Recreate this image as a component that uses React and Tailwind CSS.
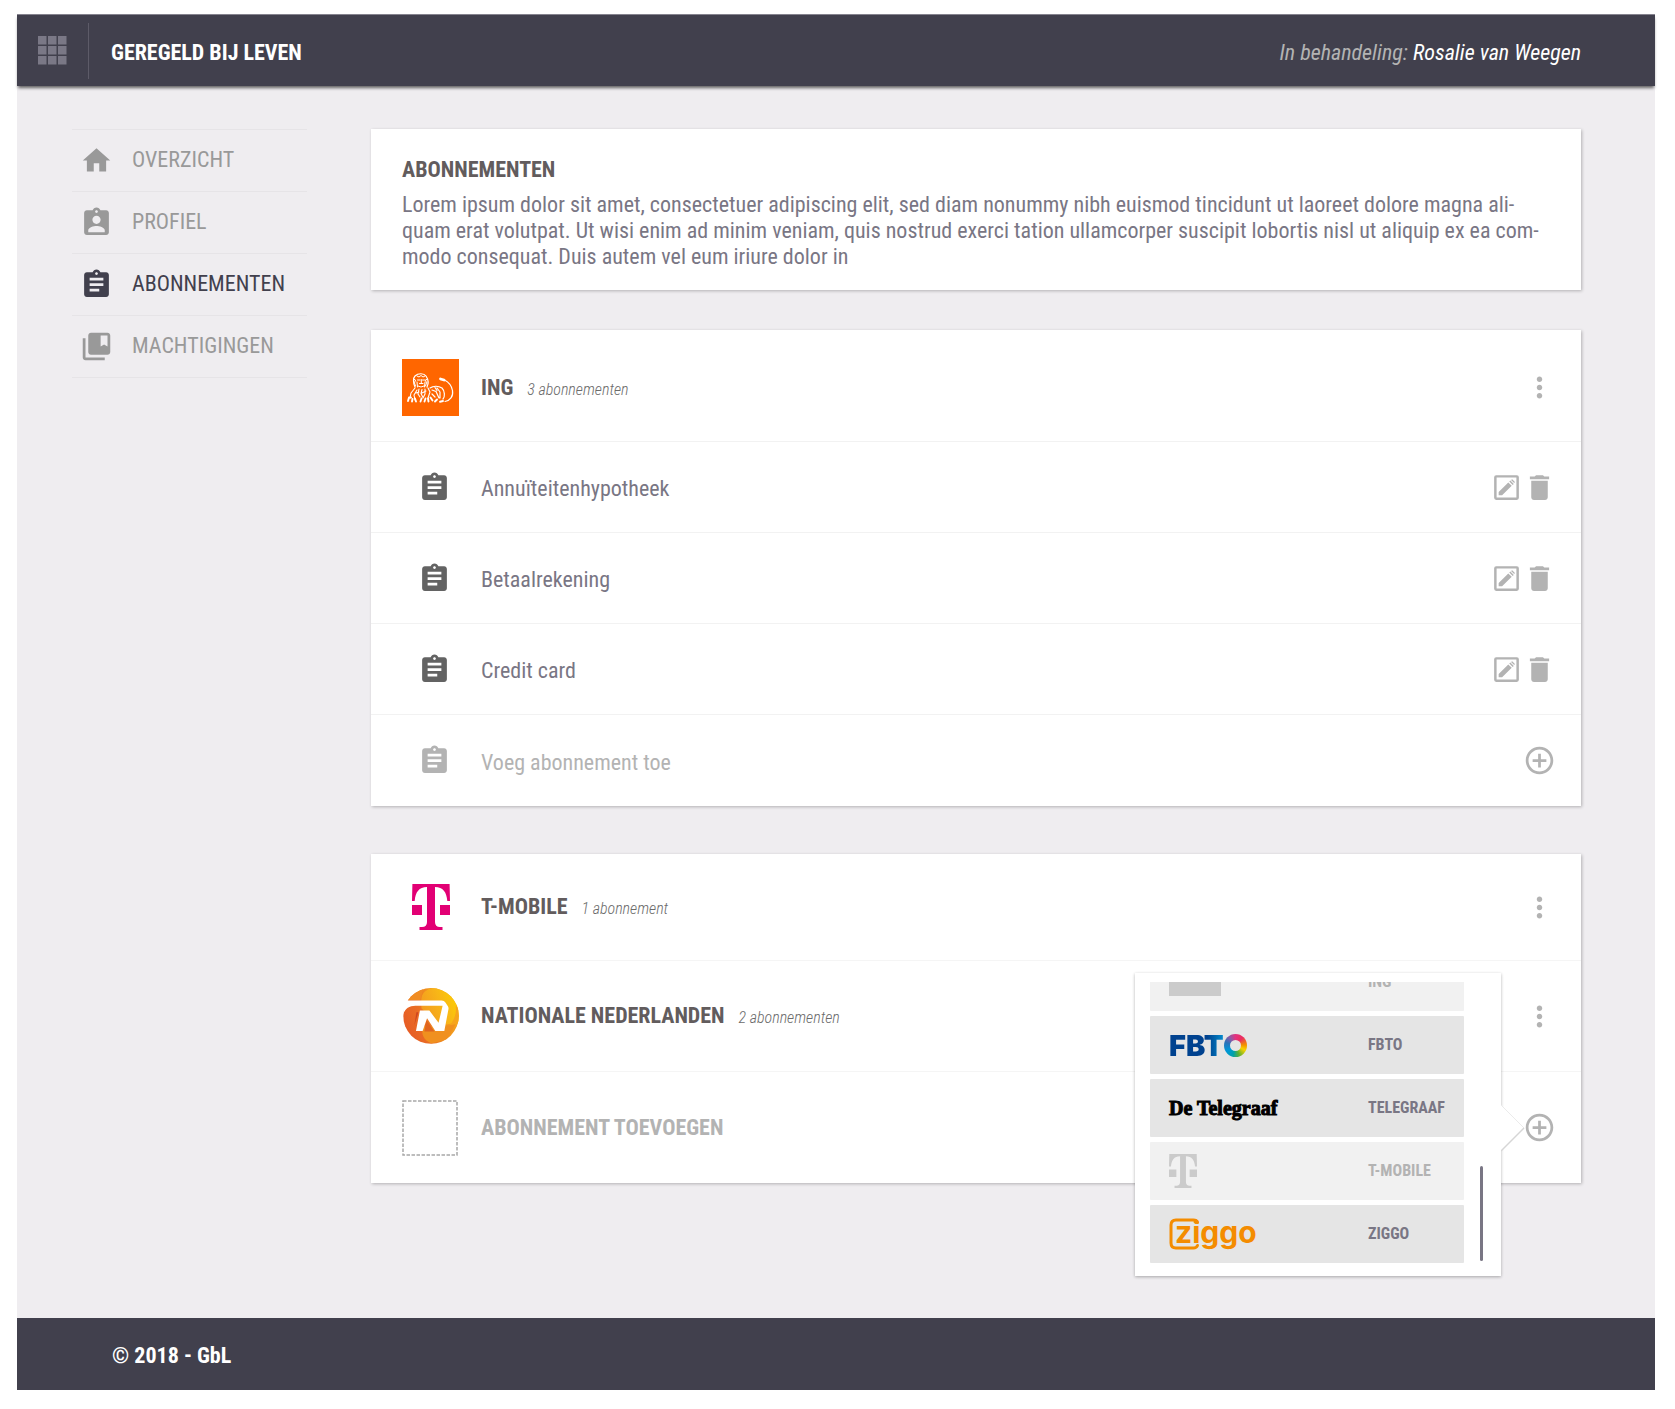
import {
  MdHome,
  MdAssignmentInd,
  MdAssignment,
  MdCollectionsBookmark,
  MdMoreVert,
  MdDelete,
  MdAddCircleOutline,
} from "react-icons/md";

function GridIcon() {
  const steps = [0, 10, 20];
  return (
    <svg width="29" height="29" viewBox="0 0 29 29" fill="#7a7886" aria-hidden="true">
      {steps.map((y) => steps.map((x) => <rect key={`${x}-${y}`} x={x} y={y} width="8.500" height="8.500" />))}
    </svg>
  );
}

function EditBoxIcon() {
  return (
    <svg width="33" height="33" viewBox="0 0 24 24" fill="currentColor" aria-hidden="true">
      <path
        fillRule="evenodd"
        d="M4.500 3h15A1.500 1.500 0 0 1 21 4.500v15a1.500 1.500 0 0 1-1.500 1.500h-15A1.500 1.500 0 0 1 3 19.500v-15A1.500 1.500 0 0 1 4.500 3zM4.800 4.800v14.400h14.400V4.800z"
      />
      <path d="M6.300 17.700v-2.500l7-6.900 2.500 2.500-7 6.900zM14 7.700l.8-.8 2.500 2.500-.8.8zM15.300 6.600l.3-.3a.6.6 0 0 1 .9 0l1.300 1.400a.6.6 0 0 1 0 .9l-.2.200z" />
    </svg>
  );
}

function IngLogo() {
  return (
    <svg width="57" height="57" viewBox="0 0 57 57" fill="none" stroke="#fff" strokeLinecap="round" strokeLinejoin="round" role="img" aria-label="ING">
      <rect width="57" height="57" fill="#ff6600" stroke="none" />
      <path strokeWidth="1.200" d="M13 28c-2-4-2-9 0-11 3-3 9-3 11 0 2 3 3 7 1 11" />
      <path strokeWidth="1" d="M11.500 20l2 1-1 3 1 3M25.500 20l-2 1 1 3-1 3M15 17l2 1 2-1.500 2 1.500 2-1M15.500 21h2.500M20.500 21h2.500M19.300 20.500v4M17.500 24.500h3.500M16 27l3 1 3-1M15 23l.5 5M23 23l-.5 5" />
      <path strokeWidth="1.100" d="M13 29l-4 5-1 5M15 31l-3 5 1 5M17 30l-1 5 2 3M20 30.500l-1 4 2 4M23 30l0 5-2 4M26 29l2 4-2 6M14 34l3-1M20 34l4-2" />
      <path strokeWidth="1.900" d="M6 42l1-3.500 2 0M10 42.500l.5-2.500M14 42.500l-1-3M18.500 42.500l1-3M22.500 42.500l1-3M26.500 42.500l-.500-3M30.500 41.500l-2-3M33 42.500l2-2M38 42.700l3-.7" />
      <path strokeWidth="1.200" d="M28 29c3-2 8-2.500 12 0 3 3 3 9 1 11M30 31l4 1.500 3 6.500M35 29l3 4 0 6M33 28.500l2 3M30 35l3 3M43 42.500c5-1 8.500-5 7.500-11-1-5-4-8.500-8-10.500" />
      <path strokeWidth="2.800" d="M38.500 20l3.500 1" />
    </svg>
  );
}

function TMobileLogo({ className }) {
  return (
    <svg viewBox="0 0 38 46" className={className} fill="currentColor" role="img" aria-label="T-Mobile">
      <path d="M.4 0h37.200l.4 17h-2.700C34.600 8 31 3 23 3v35q0 5 5 5h2.500v3h-23v-3H10q5 0 5-5V3C7 3 3.400 8 2.700 17H0zM0 21h10v10H0zM28 21h10v10H28z" />
    </svg>
  );
}

function NnLogo() {
  return (
    <svg width="56" height="56" viewBox="0 0 55 55.500" role="img" aria-label="Nationale Nederlanden">
      <defs>
        <linearGradient id="nn-base" x1="0" y1="0.700" x2="1" y2="0.300">
          <stop offset="0" stopColor="#e65a25" />
          <stop offset="0.350" stopColor="#ea6f24" />
          <stop offset="0.600" stopColor="#f0921f" />
          <stop offset="1" stopColor="#f6a81c" />
        </linearGradient>
        <linearGradient id="nn-top" x1="0" y1="0.600" x2="1" y2="0.200">
          <stop offset="0" stopColor="#f39a20" />
          <stop offset="0.550" stopColor="#f8b717" />
          <stop offset="1" stopColor="#fdd100" />
        </linearGradient>
        <clipPath id="nn-disc">
          <circle cx="27.500" cy="27.700" r="27.600" />
        </clipPath>
      </defs>
      <g clipPath="url(#nn-disc)">
        <rect width="55" height="56" fill="url(#nn-base)" />
        <path d="M0 0h20l-3 12H0z" fill="#f08c22" />
        <path d="M18 14C17 6 22 1 30 0h25v33C48 36 40 37 34 36L18 20z" fill="url(#nn-top)" />
        <path d="M52 18c1 8-2 16-9 22l4 2 9-8V18z" fill="#f6a51d" />
        <path d="M20 38c-3 7 0 14 8 17l15-4 9-15-12 2z" fill="#f0901f" />
        <path d="M13 24l-2 13 4-13z" fill="#cf4520" />
        <path d="M23 32l8 11-10 0z" fill="#e0651f" />
      </g>
      <path
        fill="#fff"
        d="M0 12.300h38q2.600 0 4 2.400l2.400 3.600q.7 1.200.4 2.700l-4.100 21.700h-8.900L23.600 30l-4.400 12.700h-6.600l3.900-20.400h9.400L35 34.500l4-16.800H12C6 17.700 2 20.500 0 26z"
      />
    </svg>
  );
}

function FbtoLogo() {
  return (
    <span className="flex items-center">
      <span className="bg-linear-to-r from-[#00428f] from-70% to-[#0a8fd0] bg-clip-text font-['Inter',sans-serif] text-[29px] leading-[29px] font-black text-transparent">
        FBT
      </span>
      <span className="flex size-[23px] items-center justify-center rounded-full bg-[conic-gradient(#e5317f,#ea2f5f_12%,#f39200_24%,#f9d200_32%,#5fb130_44%,#00a1a8_54%,#0096d8_66%,#2b72b8_80%,#8b5ba6_90%,#e5317f)]">
        <span className="size-[11px] rounded-full bg-[#e5e5e5]" />
      </span>
    </span>
  );
}

function TelegraafLogo() {
  return (
    <span className="font-['Liberation_Serif',serif] text-[20px] leading-[26px] font-bold whitespace-nowrap text-black [-webkit-text-stroke:1px_black]">
      De Telegraaf
    </span>
  );
}

function ZiggoLogo() {
  return (
    <span className="relative flex h-[32px] items-center pl-[6px] text-[#f48c00]">
      <svg width="31" height="32" viewBox="0 0 31 32" fill="none" stroke="currentColor" strokeWidth="3" strokeLinecap="round" className="absolute top-0 left-0" aria-hidden="true">
        <path d="M28.500 4.500Q27.500 2 24.500 2H7Q2 2 2 7v18q0 5 5 5h17.500q3 0 4-2.500" />
      </svg>
      <span className="pb-[4px] font-['Inter',sans-serif] text-[30px] leading-[32px] font-bold">ziggo</span>
    </span>
  );
}

const navItems = [
  { label: "OVERZICHT", Icon: MdHome },
  { label: "PROFIEL", Icon: MdAssignmentInd },
  { label: "ABONNEMENTEN", Icon: MdAssignment, active: true },
  { label: "MACHTIGINGEN", Icon: MdCollectionsBookmark },
];

const products = ["Annuïteitenhypotheek", "Betaalrekening", "Credit card"];

const providers = [
  { label: "ING", logo: <span className="h-[28px] w-[52px] bg-[#cbcbcb]" />, disabled: true },
  { label: "FBTO", logo: <FbtoLogo /> },
  { label: "TELEGRAAF", logo: <TelegraafLogo /> },
  { label: "T-MOBILE", logo: <TMobileLogo className="h-[34px] w-[28px] text-[#cbcbcb]" />, disabled: true },
  { label: "ZIGGO", logo: <ZiggoLogo /> },
];

const card = "bg-white shadow-[1px_1px_3px_rgba(0,0,0,0.25)]";

function IconButton({ label, children }) {
  return (
    <button type="button" aria-label={label} className="size-[33px] cursor-pointer text-[#b3b3b3]">
      {children}
    </button>
  );
}

function ProviderRow({ logo, name, count, className }) {
  return (
    <div className={`flex items-center gap-[22px] pr-[25px] pl-[31px] ${className}`}>
      <div className="flex w-[57px] justify-center">{logo}</div>
      <div className="flex flex-1 items-baseline gap-[14px]">
        <h2 className="text-[22px] leading-[26px] font-bold text-[#625c5d]">{name}</h2>
        <span className="text-[16px] leading-[20px] font-light text-[#6b6b6b] italic">{count}</span>
      </div>
      <IconButton label={`Opties voor ${name}`}>
        <MdMoreVert size={33} />
      </IconButton>
    </div>
  );
}

function ProviderPicker() {
  return (
    <div className="absolute -top-[138px] right-[55px] flex h-[303px] w-[366px] gap-[16px] bg-white py-[9px] pl-[15px] shadow-[0_1px_3px_rgba(0,0,0,0.3)]">
      <ul className="flex h-[281px] w-[314px] flex-col justify-end gap-[5px] overflow-hidden">
        {providers.map(({ label, logo, disabled }) => (
          <li key={label} className="shrink-0">
            <button
              type="button"
              disabled={disabled}
              className={`flex h-[58px] w-full items-center rounded-[1px] pl-[19px] text-left text-[16px] font-bold ${
                disabled ? "bg-[#f1f1f1] text-[#b3b3b3]" : "bg-[#e5e5e5] text-[#797684]"
              }`}
            >
              <span className="flex w-[199px] items-center">{logo}</span>
              {label}
            </button>
          </li>
        ))}
      </ul>
      <div className="mb-[6px] h-[95px] w-[3px] self-end rounded-full bg-[#797684]" />
      <svg width="25" height="48" viewBox="0 0 25 48" className="absolute top-[131px] left-full" aria-hidden="true">
        <path d="M-1 1 0 1 23 24 0 47 -1 47z" fill="#fff" />
        <path d="M0 1 23 24" stroke="#ebebeb" fill="none" />
        <path d="M23 24 0 47" stroke="#d6d6d6" strokeWidth="1.500" fill="none" />
      </svg>
    </div>
  );
}

export default function App() {
  return (
    <div className="min-h-screen bg-white pt-[14px] pr-5 pb-[19px] pl-[17px] font-['Roboto_Condensed','Roboto',sans-serif]">
      <div className="bg-[#efedf0]">
        <header className="relative flex h-[72px] items-center border-t border-[#85838e] bg-[#41404d] pr-[74px] pl-[21px] shadow-[0_3px_3px_-1px_rgba(0,0,0,0.6)]">
          <button type="button" aria-label="Menu" className="cursor-pointer">
            <GridIcon />
          </button>
          <div className="mr-[22px] ml-[21px] h-[56px] w-px bg-[#5d5b68]" />
          <h1 className="flex-1 pt-[5px] text-[22px] leading-[26px] font-bold text-white">GEREGELD BIJ LEVEN</h1>
          <p className="pt-[5px] text-[22px] leading-[26px] text-white italic">
            <span className="text-[#b3b3b3]">In behandeling:</span> Rosalie van Weegen
          </p>
        </header>

        <div className="flex gap-[64px] pt-[43px] pr-[74px] pb-[135px] pl-[55px]">
          <nav className="w-[235px] shrink-0">
            <ul className="border-t border-[#e6e4e7]">
              {navItems.map(({ label, Icon, active }) => (
                <li key={label} className="border-b border-[#e6e4e7]">
                  <a
                    href="#"
                    aria-current={active ? "page" : undefined}
                    className={`flex h-[61px] items-center gap-[19px] pl-[8px] text-[22px] leading-[26px] ${
                      active ? "text-[#41404d]" : "text-[#999999]"
                    }`}
                  >
                    <Icon size={33} />
                    <span className="pb-px">{label}</span>
                  </a>
                </li>
              ))}
            </ul>
          </nav>

          <main className="min-w-0 flex-1">
            <section className={`px-[31px] pt-[28px] pb-[20px] ${card}`}>
              <h2 className="text-[22px] leading-[26px] font-bold text-[#625c5d]">ABONNEMENTEN</h2>
              <p className="mt-[9px] text-[22px] leading-[26px] text-[#797684]">
                Lorem ipsum dolor sit amet, consectetuer adipiscing elit, sed diam nonummy nibh euismod tincidunt ut
                laoreet dolore magna ali&shy;quam erat volutpat. Ut wisi enim ad minim veniam, quis nostrud exerci
                tation ullamcorper suscipit lobortis nisl ut aliquip ex ea com&shy;modo consequat. Duis autem vel eum
                iriure dolor in
              </p>
            </section>

            <section className={`mt-[40px] divide-y divide-[#f2f2f2] ${card}`}>
              <ProviderRow logo={<IngLogo />} name="ING" count="3 abonnementen" className="h-[112px] pt-[4px]" />
              {products.map((name) => (
                <div key={name} className="flex h-[91px] items-center gap-[22px] pr-[25px] pl-[31px]">
                  <div className="flex w-[57px] justify-center pl-[8px] text-[#636363]">
                    <MdAssignment size={33} />
                  </div>
                  <span className="flex-1 pt-[4px] text-[22px] leading-[26px] text-[#797684]">{name}</span>
                  <div className="flex">
                    <IconButton label={`${name} bewerken`}>
                      <EditBoxIcon />
                    </IconButton>
                    <IconButton label={`${name} verwijderen`}>
                      <MdDelete size={33} />
                    </IconButton>
                  </div>
                </div>
              ))}
              <div className="flex h-[91px] items-center gap-[22px] pr-[25px] pl-[31px] text-[#b3b3b3]">
                <div className="flex w-[57px] justify-center pl-[8px]">
                  <MdAssignment size={33} />
                </div>
                <span className="flex-1 pt-[4px] text-[22px] leading-[26px]">Voeg abonnement toe</span>
                <IconButton label="Voeg abonnement toe">
                  <MdAddCircleOutline size={33} />
                </IconButton>
              </div>
            </section>

            <section className={`mt-[48px] divide-y divide-[#f5f5f5] ${card}`}>
              <ProviderRow
                logo={<TMobileLogo className="h-[46px] w-[38px] text-[#e20074]" />}
                name="T-MOBILE"
                count="1 abonnement"
                className="h-[107px]"
              />
              <ProviderRow logo={<NnLogo />} name="NATIONALE NEDERLANDEN" count="2 abonnementen" className="h-[111px]" />
              <div className="flex h-[111px] items-center gap-[22px] pr-[25px] pl-[31px]">
                <div className="flex w-[57px]">
                  <svg width="56" height="56" viewBox="0 0 56 56" aria-hidden="true">
                    <rect x="1" y="1" width="54" height="54" fill="none" stroke="#a8a8a8" strokeWidth="1.500" strokeDasharray="3.500 1.500" />
                  </svg>
                </div>
                <h2 className="flex-1 text-[22px] leading-[26px] font-bold text-[#b3b3b3]">ABONNEMENT TOEVOEGEN</h2>
                <div className="relative flex">
                  <IconButton label="Abonnement toevoegen">
                    <MdAddCircleOutline size={33} />
                  </IconButton>
                  <ProviderPicker />
                </div>
              </div>
            </section>
          </main>
        </div>

        <footer className="flex h-[72px] items-center bg-[#41404d] px-[95px] pt-[4px] text-[22px] leading-[26px] font-bold text-white">
          © 2018 - GbL
        </footer>
      </div>
    </div>
  );
}
